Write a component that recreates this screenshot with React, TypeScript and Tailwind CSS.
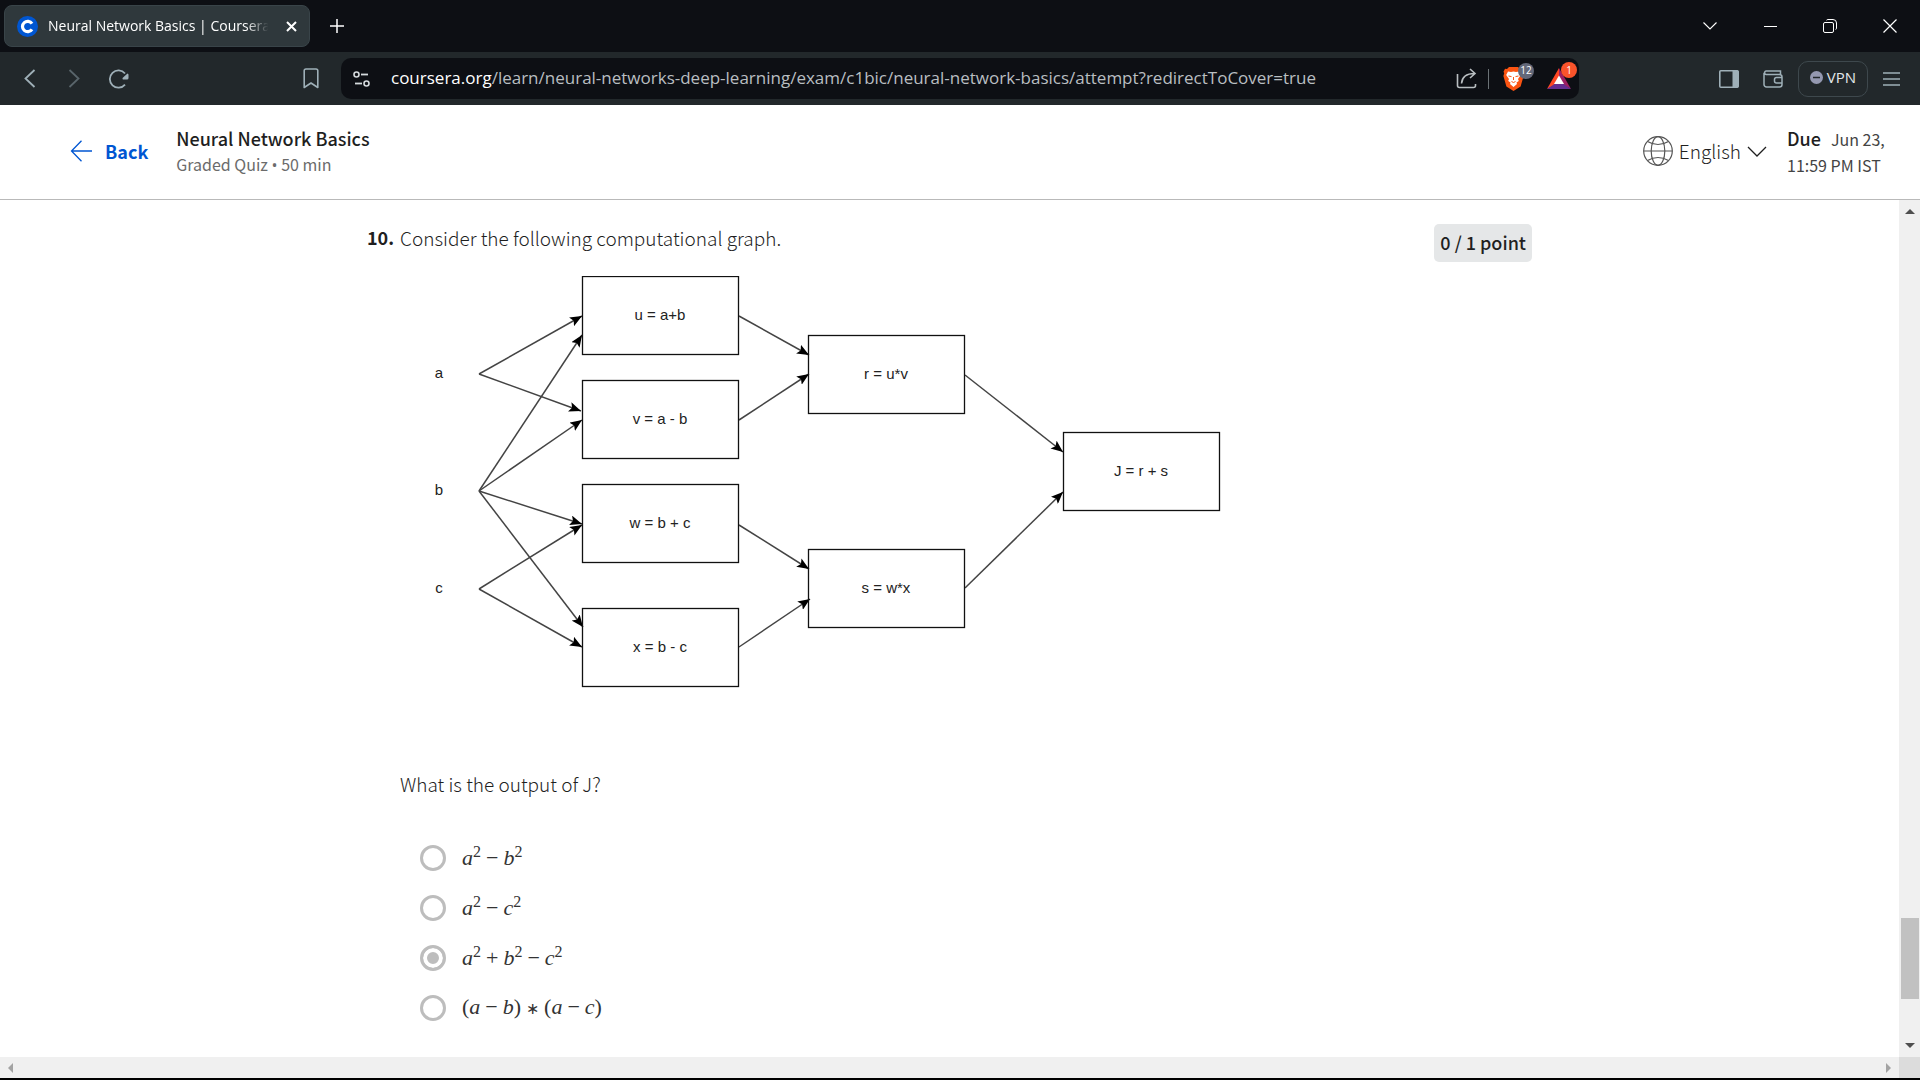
import React from "react";

const ui = "font-['Open_Sans','Noto_Sans',sans-serif]";

function Svg({ w, h, children, label }: { w: number; h: number; children: React.ReactNode; label?: string }) {
  return (
    <svg width={w} height={h} viewBox={`0 0 ${w} ${h}`} fill="none" stroke="currentColor" className="shrink-0" aria-label={label} aria-hidden={label ? undefined : true}>
      {children}
    </svg>
  );
}

function TabStrip() {
  return (
    <div className={`flex h-[52px] items-center bg-[#0d0f14] text-white ${ui}`}>
      <div className="ml-1 flex h-[42px] w-[306px] items-center rounded-lg border border-[#394449] bg-[#2f383c] pl-3">
        <Svg w={21} h={21}>
          <circle cx="10.5" cy="10.5" r="10.5" fill="#0056d2" stroke="none" />
          <path d="M15 7.6A5.2 5.2 0 1 0 15 13.4" stroke="#fff" strokeWidth="3.2" />
        </Svg>
        <span className="ml-2.5 w-[225px] overflow-hidden whitespace-nowrap text-sm [mask-image:linear-gradient(to_right,black_88%,transparent_98%)]">
          Neural Network Basics | Coursera
        </span>
        <button aria-label="Close tab" className="ml-1 flex h-6 w-7 items-center justify-center">
          <Svg w={11} h={11}><path d="M1 1l9 9M10 1l-9 9" strokeWidth="2" /></Svg>
        </button>
      </div>
      <button aria-label="New tab" className="ml-[11px] flex h-8 w-8 items-center justify-center">
        <Svg w={14} h={14}><path d="M7 0v14M0 7h14" strokeWidth="1.5" /></Svg>
      </button>
      <div className="flex-1" />
      <button aria-label="Search tabs" className="flex h-full w-[60px] items-center justify-center">
        <Svg w={14} h={8}><path d="M.5 .5L7 7L13.5 .5" strokeWidth="1.1" /></Svg>
      </button>
      <button aria-label="Minimize" className="flex h-full w-[60px] items-center justify-center">
        <Svg w={13} h={1}><path d="M0 .5h13" /></Svg>
      </button>
      <button aria-label="Restore" className="flex h-full w-[60px] items-center justify-center">
        <Svg w={14} h={14}>
          <rect x=".5" y="3.5" width="10" height="10" rx="1.5" />
          <path d="M3.5 1.2Q4 .5 5 .5h5q3.5 0 3.5 3.5v5q0 1-.8 1.6" />
        </Svg>
      </button>
      <button aria-label="Close window" className="flex h-full w-[60px] items-center justify-center">
        <Svg w={14} h={14}><path d="M.5 .5l13 13M13.5 .5l-13 13" strokeWidth="1.2" /></Svg>
      </button>
    </div>
  );
}

function Toolbar() {
  return (
    <div className={`flex h-[53px] items-center bg-[#22282b] text-[#9fb0b8] ${ui}`}>
      <div className="flex w-[341px] items-center pl-2">
        <button aria-label="Back" className="flex h-9 w-11 items-center justify-center">
          <Svg w={12} h={19}><path d="M10.5 1L1.5 9.5l9 8.5" strokeWidth="1.8" /></Svg>
        </button>
        <button aria-label="Forward" className="flex h-9 w-11 items-center justify-center text-[#59656b]">
          <Svg w={12} h={19}><path d="M1.5 1l9 8.5-9 8.5" strokeWidth="1.8" /></Svg>
        </button>
        <button aria-label="Reload" className="flex h-9 w-11 items-center justify-center">
          <Svg w={21} h={20}>
            <path d="M17 4.500A8.600 8.600 0 1 0 17 15.600" strokeWidth="1.800" />
            <path d="M19.500 4.500a1.500 1.500 0 0 1 1 1.500v3a1.500 1.500 0 0 1-1.500 1.500h-3.500a1 1 0 0 1-.7-1.700Z" fill="currentColor" stroke="none" />
          </Svg>
        </button>
        <div className="flex-1" />
        <button aria-label="Bookmark this page" className="mr-3 flex h-9 w-9 items-center justify-center">
          <Svg w={16} h={21}><path d="M3 1h10a1.8 1.8 0 0 1 1.8 1.8V19.5L8 15 1.2 19.500V2.800A1.800 1.800 0 0 1 3 1Z" strokeWidth="1.6" strokeLinejoin="round" /></Svg>
        </button>
      </div>
      <div className="flex h-[41px] flex-1 items-center rounded-[10px] bg-[#0d0f14] pl-3 pr-2">
        <button aria-label="Site settings" className="text-[#d5dadd]">
          <Svg w={18} h={16}>
            <circle cx="3.500" cy="3.500" r="2.500" strokeWidth="1.600" />
            <path d="M8 3.500h7" strokeWidth="1.800" />
            <circle cx="13.500" cy="12.500" r="2.500" strokeWidth="1.600" />
            <path d="M2 12.500h7" strokeWidth="1.800" />
          </Svg>
        </button>
        <div className="ml-5 flex-1 whitespace-nowrap pb-0.5 text-[17px] text-[#b9bec1]">
          <span className="text-white">coursera.org</span>/learn/neural-networks-deep-learning/exam/c1bic/neural-network-basics/attempt?redirectToCover=true
        </div>
        <button aria-label="Share" className="text-[#b9bec1]">
          <Svg w={22} h={21}>
            <path d="M1.500 6v11.500a2 2 0 0 0 2 2h14a2 2 0 0 0 2-2V16" strokeWidth="1.600" />
            <path d="M5.500 15.500C6 9 10 5.500 18.500 5.500M14 1l5 4.500-5 4.500" strokeWidth="1.600" />
          </Svg>
        </button>
        <span className="ml-2.5 h-5 w-px bg-[#6b7276]" />
        <button aria-label="Brave Shields" className="relative ml-3.5">
          <Svg w={21} h={24}>
            <path d="M6 0h9l2 2 2-.3 1.500 3-.7 1.600.8 2.700-3 10.500L10.500 24 3.400 19.500.4 9l.8-2.700-.7-1.600 1.500-3L4 2Z" fill="#fb5412" stroke="none" />
            <path d="M5 4.500l3 .5 2.500-.5 2.500.5 3-.5 1.800 3.500-2.800 4 .8 2-2.300 1.500.5 1.500-3.500 3-3.500-3 .5-1.500L5.200 14l.8-2-2.800-4Z" fill="#fff" stroke="none" />
            <path d="M5.500 9l3 .6M15.500 9l-3 .6M8.500 14.500l2 1 2-1M10.500 10v3" stroke="#fb5412" strokeWidth="1" />
          </Svg>
          <span className="absolute -right-2.5 -top-1 flex h-4 w-4 items-center justify-center rounded-full bg-[#636879] text-[10px] text-white">12</span>
        </button>
        <button aria-label="Brave Rewards" className="relative ml-[23px]">
          <Svg w={24} h={21}>
            <path d="M12 0L0 21l7.500-4L12 9Z" fill="#ff4724" stroke="none" />
            <path d="M12 0l12 21-7.500-4L12 9Z" fill="#9e1f63" stroke="none" />
            <path d="M0 21h24l-7.500-5h-9Z" fill="#662d91" stroke="none" />
            <path d="M12 7.500L17 16H7Z" fill="#fff" stroke="none" />
          </Svg>
          <span className="absolute -right-1.5 -top-1.5 flex h-4 w-4 items-center justify-center rounded-full bg-[#fb542b] text-[10px] text-white">1</span>
        </button>
      </div>
      <div className="flex w-[341px] items-center justify-end pr-5">
        <button aria-label="Sidebar">
          <Svg w={20} h={18}><rect x=".8" y=".8" width="18.400" height="16.400" rx="1" strokeWidth="1.600" /><path d="M14 1h5v16h-5Z" fill="currentColor" /></Svg>
        </button>
        <button aria-label="Wallet" className="ml-6">
          <Svg w={20} h={18}>
            <path d="M1 2.800V14.500a2.500 2.500 0 0 0 2.500 2.500h13a2.500 2.500 0 0 0 2.500-2.500V7a2.500 2.500 0 0 0-2.500-2.500H3A1.800 1.800 0 0 1 3 1h14.500v4" strokeWidth="1.500" />
            <path d="M19 7.500h-5.500a2 2 0 0 0-2 2v1.500a2 2 0 0 0 2 2H19" strokeWidth="1.500" />
          </Svg>
        </button>
        <button className="ml-[15px] flex h-9 w-[70px] items-center justify-center gap-1 rounded-[10px] border border-[#3e484d] pb-0.5 text-[15px] text-[#e3e7ea]">
          <Svg w={13} h={13}><circle cx="6.500" cy="6.500" r="6.500" fill="#9498b0" stroke="none" /><path d="M3 6.500h7" stroke="#22282b" strokeWidth="1.500" /></Svg>
          VPN
        </button>
        <button aria-label="Menu" className="ml-[15px]">
          <Svg w={17} h={14}><path d="M0 1h17M0 7h17M0 13h17" strokeWidth="1.500" /></Svg>
        </button>
      </div>
    </div>
  );
}

function QuizHeader() {
  return (
    <header className="flex h-[95px] items-center border-b border-[#b9b9b9] pb-0.5 pl-[70px] pr-8 text-[#1f1f1f]">
      <a href="#back" className="flex items-center gap-[13px] text-lg font-semibold text-[#0056d2]">
        <Svg w={22} h={22}><path d="M11.500 .8L1.500 11l10 10.200M1.500 11H22" strokeWidth="1.300" /></Svg>
        Back
      </a>
      <div className="ml-7">
        <h1 className="text-lg font-medium leading-[26px]">Neural Network Basics</h1>
        <p className="text-base leading-[26px] text-[#6b6b6b]">
          Graded Quiz <span className="font-['Open_Sans',sans-serif]">•</span> 50 min
        </p>
      </div>
      <div className="flex-1" />
      <button className="flex items-center gap-1.5 text-[19px] font-light text-[#1f1f1f]">
        <Svg w={30} h={30}>
          <g strokeWidth="1.200" stroke="#555">
            <circle cx="15" cy="15" r="14.300" />
            <ellipse cx="15" cy="15" rx="6.800" ry="14.300" />
            <path d="M.7 15h28.600M4.500 5.500Q15 11.500 25.500 5.500M4.500 24.500Q15 18.500 25.500 24.500" />
          </g>
        </Svg>
        English
        <Svg w={20} h={11}><path d="M1 1l9 9 9-9" strokeWidth="1.300" /></Svg>
      </button>
      <div className="ml-5 w-[101px] whitespace-nowrap">
        <p className="leading-[26px]"><span className="mr-2.5 text-lg font-medium leading-[26px]">Due</span><span className="text-base leading-[26px] text-[#444]">Jun 23,</span></p>
        <p className="text-base leading-[26px] text-[#444]">11:59 PM IST</p>
      </div>
    </header>
  );
}

const nodes = [
  { x: 182, y: 1, label: "u = a+b" },
  { x: 182, y: 105, label: "v = a - b" },
  { x: 182, y: 209, label: "w = b + c" },
  { x: 182, y: 333, label: "x = b - c" },
  { x: 408, y: 60, label: "r = u*v" },
  { x: 408, y: 274, label: "s = w*x" },
  { x: 663, y: 157, label: "J = r + s" },
];
const inputs = [
  { y: 98, label: "a" },
  { y: 215, label: "b" },
  { y: 313, label: "c" },
];
const edges = [
  [79, 98, 182, 40], [79, 98, 181, 135],
  [79, 215, 182, 59], [79, 215, 182, 144], [79, 215, 182, 248], [79, 215, 183, 351],
  [79, 313, 182, 249], [79, 313, 182, 371],
  [339, 40, 409, 79], [339, 144, 409, 98], [339, 249, 409, 293], [339, 371, 410, 323],
  [565, 99, 663, 176], [565, 312, 663, 216],
];

function Graph() {
  return (
    <svg width="822" height="412" viewBox="0 0 822 412" role="img" aria-label="Computational graph" className="block">
      <defs>
        <marker id="arrow" viewBox="0 0 12 10" refX="12" refY="5" markerWidth="12" markerHeight="10" markerUnits="userSpaceOnUse" orient="auto">
          <path d="M12 5L0 0L2.500 5L0 10Z" fill="#000" />
        </marker>
      </defs>
      {edges.map(([a, b, c, d], i) => (
        <line key={i} x1={a} y1={b} x2={c} y2={d} stroke="#444" strokeWidth="1.500" markerEnd="url(#arrow)" />
      ))}
      <g className="font-['Liberation_Sans',Arial,sans-serif] text-[15px]" fill="#222" textAnchor="middle">
        {nodes.map((n) => (
          <g key={n.label}>
            <rect x={n.x + 0.5} y={n.y - 0.5} width="156" height="78" fill="none" stroke="#111" strokeWidth="1.300" />
            <text x={n.x + 78} y={n.y + 43}>{n.label}</text>
          </g>
        ))}
        {inputs.map((n) => (
          <text key={n.label} x="39" y={n.y + 4}>{n.label}</text>
        ))}
      </g>
    </svg>
  );
}

const V = ({ children }: { children: string }) => <i>{children}</i>;
const Sq = () => <sup className="relative -top-2 text-base leading-none">2</sup>;
const Op = ({ children }: { children: string }) => <span className="mx-[5px]">{children}</span>;

const options = [
  { id: "o1", body: <><V>a</V><Sq /><Op>−</Op><V>b</V><Sq /></> },
  { id: "o2", body: <><V>a</V><Sq /><Op>−</Op><V>c</V><Sq /></> },
  { id: "o3", body: <><V>a</V><Sq /><Op>+</Op><V>b</V><Sq /><Op>−</Op><V>c</V><Sq /></> },
  { id: "o4", body: <>(<V>a</V><Op>−</Op><V>b</V>)<span className="mx-[5px] text-base">∗</span>(<V>a</V><Op>−</Op><V>c</V>)</> },
];

function Question() {
  return (
    <main className="min-w-0 flex-1 px-[367px] text-lg text-[#1f1f1f]">
      <div className="flex items-start pt-6">
        <span className="w-[33px] shrink-0 font-semibold leading-[26px]">10.</span>
        <p className="flex-1 text-[19px] font-light leading-7">Consider the following computational graph.</p>
        <span className="flex h-[38px] items-center rounded-[5px] bg-[#e5e7e8] px-1.5 pb-0.5 font-medium">0 / 1 point</span>
      </div>
      <div className="pl-[33px] pt-3.5">
        <Graph />
        <p className="mt-[81px] text-[19px] font-light leading-[30px]">What is the output of J?</p>
        <fieldset className="ml-5 mt-[34px]">
          {options.map((o) => (
            <label key={o.id} htmlFor={o.id} className="flex h-[50px] items-center gap-4">
              <input id={o.id} name="answer" type="radio" defaultChecked={o.id === "o3"} className="h-[26px] w-[26px] appearance-none rounded-full border-[3px] border-[#bdbdbd] checked:bg-[#bdbdbd] checked:shadow-[inset_0_0_0_4px_white]" />
              <span className="whitespace-nowrap font-['Liberation_Serif','Times_New_Roman',serif] text-[22px] leading-none text-[#333]">{o.body}</span>
            </label>
          ))}
        </fieldset>
      </div>
    </main>
  );
}

export default function App() {
  return (
    <div className="flex min-h-screen flex-col bg-white font-['Noto_Sans_CJK_SC',sans-serif]">
      <TabStrip />
      <Toolbar />
      <QuizHeader />
      <div className="flex flex-1">
        <Question />
        <div className="flex w-[21px] flex-col items-center bg-[#f0f0f0] py-[9px] text-[#4f4f4f]">
          <Svg w={10} h={5}><path d="M0 5L5 0l5 5Z" fill="currentColor" stroke="none" /></Svg>
          <div className="grow-[704]" />
          <div className="w-[18px] grow-[81] bg-[#c1c1c1]" />
          <div className="grow-[44]" />
          <Svg w={10} h={5}><path d="M0 0l5 5 5-5Z" fill="currentColor" stroke="none" /></Svg>
        </div>
      </div>
      <div className="flex h-[23px] border-b-2 border-black bg-[#f0f0f0] text-[#a3a3a3]">
        <div className="flex flex-1 items-center justify-between px-2">
          <Svg w={5} h={10}><path d="M5 0L0 5l5 5Z" fill="currentColor" stroke="none" /></Svg>
          <Svg w={5} h={10}><path d="M0 0l5 5-5 5Z" fill="currentColor" stroke="none" /></Svg>
        </div>
        <div className="w-[21px] bg-[#dcdcdc]" />
      </div>
    </div>
  );
}
